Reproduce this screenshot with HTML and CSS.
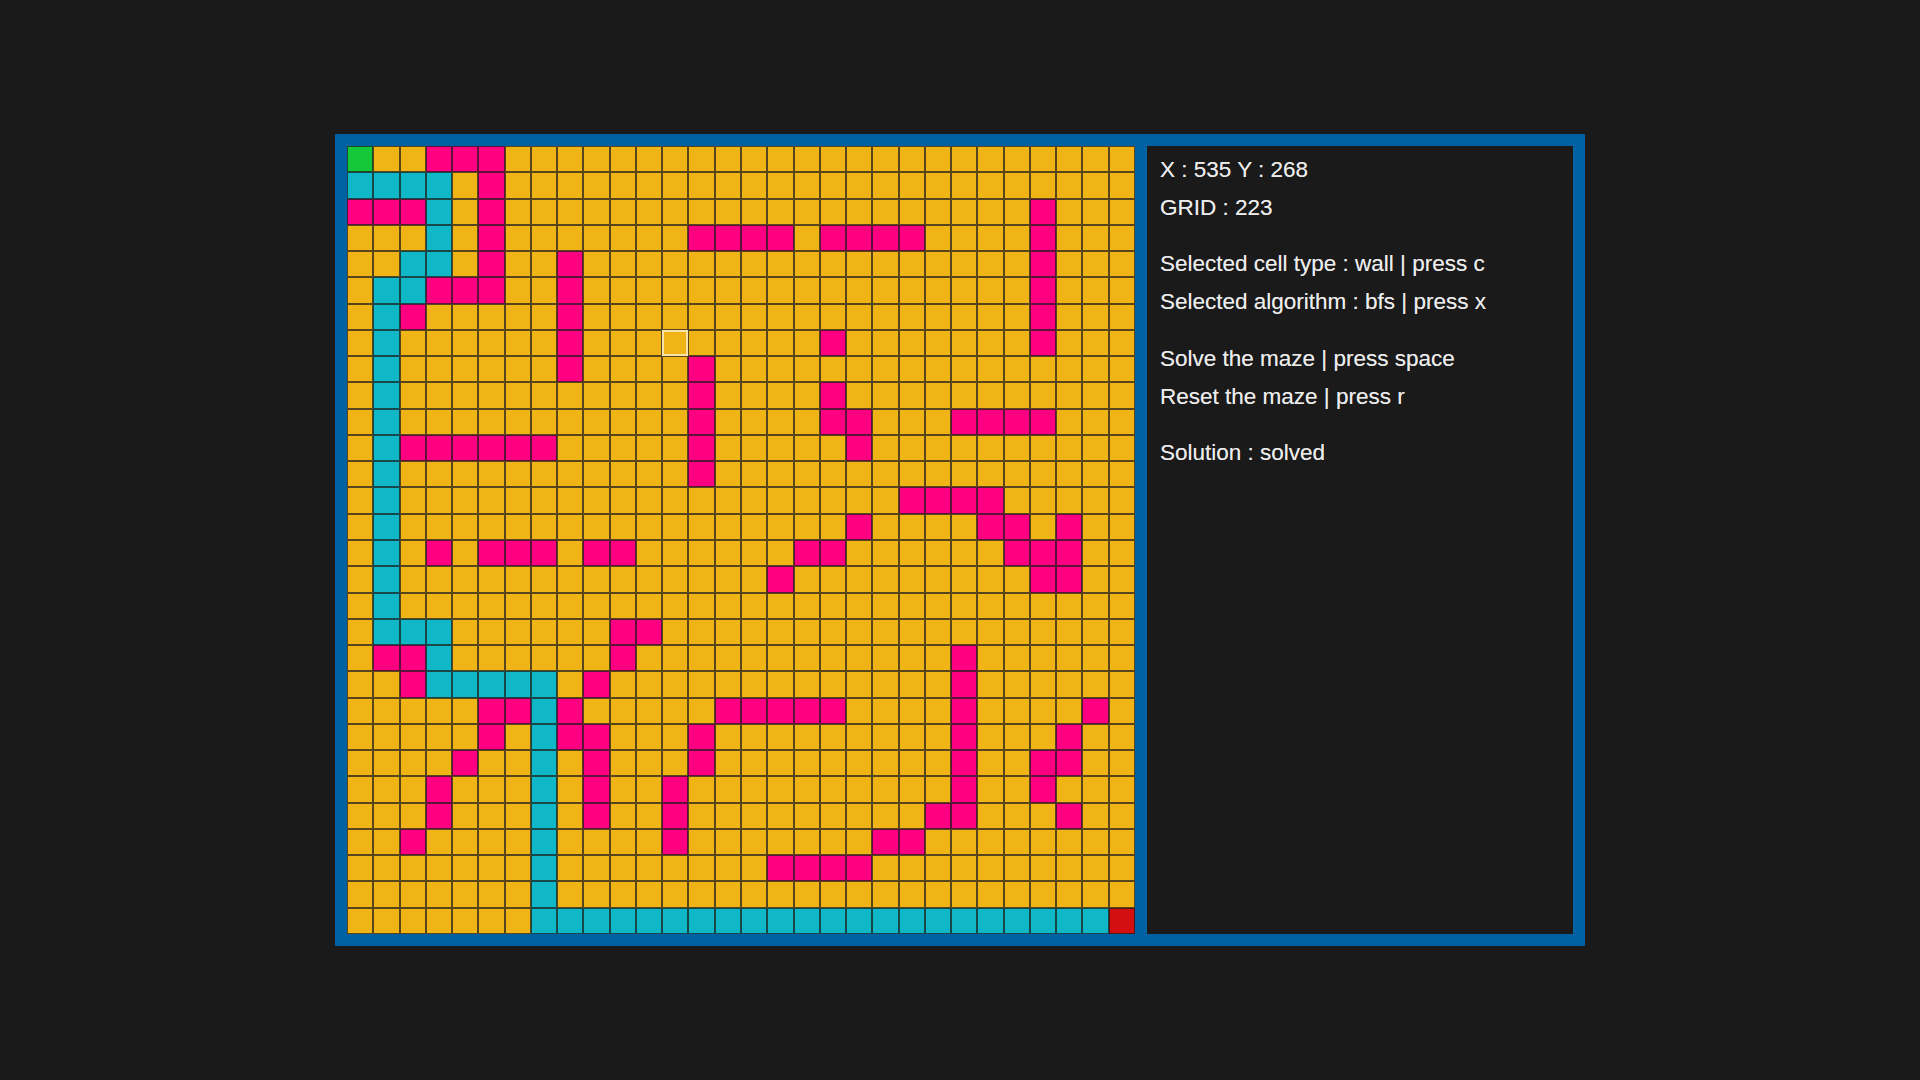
FILE: index.html
```html
<!DOCTYPE html>
<html lang="en">
<head>
<meta charset="utf-8">
<title>Maze solver</title>
<link rel="stylesheet" href="styles.css">
</head>
<body>
<main class="frame">
<div class="maze">
<i class="start"></i><i></i><i></i><i class="wall"></i><i class="wall"></i><i class="wall"></i> <i></i><i></i><i></i><i></i><i></i><i></i><i></i><i></i><i></i><i></i><i></i><i></i><i></i><i></i><i></i><i></i><i></i><i></i><i></i><i></i><i></i><i></i><i></i><i></i>
<i class="path"></i><i class="path"></i><i class="path"></i><i class="path"></i><i></i><i class="wall"></i> <i></i><i></i><i></i><i></i><i></i><i></i><i></i><i></i><i></i><i></i><i></i><i></i><i></i><i></i><i></i><i></i><i></i><i></i><i></i><i></i><i></i><i></i><i></i><i></i>
<i class="wall"></i><i class="wall"></i><i class="wall"></i><i class="path"></i><i></i><i class="wall"></i> <i></i><i></i><i></i><i></i><i></i><i></i><i></i><i></i><i></i><i></i><i></i><i></i><i></i><i></i><i></i><i></i><i></i><i></i><i></i><i></i> <i class="wall"></i><i></i><i></i><i></i>
<i></i><i></i><i></i><i class="path"></i><i></i><i class="wall"></i> <i></i><i></i><i></i><i></i><i></i><i></i><i></i> <i class="wall"></i><i class="wall"></i><i class="wall"></i><i class="wall"></i><i></i><i class="wall"></i><i class="wall"></i><i class="wall"></i><i class="wall"></i> <i></i><i></i><i></i><i></i><i class="wall"></i><i></i><i></i><i></i>
<i></i><i></i><i class="path"></i><i class="path"></i><i></i><i class="wall"></i><i></i><i></i><i class="wall"></i> <i></i><i></i><i></i><i></i><i></i><i></i><i></i><i></i><i></i><i></i><i></i><i></i><i></i><i></i><i></i><i></i><i></i> <i class="wall"></i><i></i><i></i><i></i>
<i></i><i class="path"></i><i class="path"></i><i class="wall"></i><i class="wall"></i><i class="wall"></i><i></i><i></i><i class="wall"></i> <i></i><i></i><i></i><i></i><i></i><i></i><i></i><i></i><i></i><i></i><i></i><i></i><i></i><i></i><i></i><i></i><i></i> <i class="wall"></i><i></i><i></i><i></i>
<i></i><i class="path"></i><i class="wall"></i><i></i><i></i><i></i><i></i><i></i><i class="wall"></i> <i></i><i></i><i></i><i></i><i></i><i></i><i></i><i></i><i></i><i></i><i></i><i></i><i></i><i></i><i></i><i></i><i></i> <i class="wall"></i><i></i><i></i><i></i>
<i></i><i class="path"></i><i></i><i></i><i></i><i></i><i></i><i></i><i class="wall"></i><i></i><i></i><i></i><i class="hover"></i><i></i><i></i><i></i><i></i><i></i><i class="wall"></i><i></i><i></i><i></i><i></i><i></i><i></i><i></i><i class="wall"></i><i></i><i></i><i></i>
<i></i><i class="path"></i><i></i><i></i><i></i><i></i><i></i><i></i><i class="wall"></i><i></i><i></i><i></i><i></i><i class="wall"></i> <i></i><i></i><i></i><i></i><i></i><i></i><i></i><i></i><i></i><i></i><i></i><i></i><i></i><i></i><i></i><i></i>
<i></i><i class="path"></i> <i></i><i></i><i></i><i></i><i></i><i></i><i></i><i></i><i></i><i></i><i></i> <i class="wall"></i><i></i><i></i><i></i><i></i><i class="wall"></i> <i></i><i></i><i></i><i></i><i></i><i></i><i></i><i></i><i></i><i></i><i></i>
<i></i><i class="path"></i> <i></i><i></i><i></i><i></i><i></i><i></i><i></i><i></i><i></i><i></i><i></i> <i class="wall"></i><i></i><i></i><i></i><i></i><i class="wall"></i><i class="wall"></i><i></i><i></i><i></i><i class="wall"></i><i class="wall"></i><i class="wall"></i><i class="wall"></i><i></i><i></i><i></i>
<i></i><i class="path"></i><i class="wall"></i><i class="wall"></i><i class="wall"></i><i class="wall"></i><i class="wall"></i><i class="wall"></i><i></i><i></i><i></i><i></i><i></i><i class="wall"></i><i></i><i></i><i></i><i></i><i></i><i class="wall"></i> <i></i><i></i><i></i><i></i><i></i><i></i><i></i><i></i><i></i><i></i>
<i></i><i class="path"></i> <i></i><i></i><i></i><i></i><i></i><i></i><i></i><i></i><i></i><i></i><i></i> <i class="wall"></i> <i></i><i></i><i></i><i></i><i></i><i></i><i></i><i></i><i></i><i></i><i></i><i></i><i></i><i></i><i></i><i></i>
<i></i><i class="path"></i> <i></i><i></i><i></i><i></i><i></i><i></i><i></i><i></i><i></i><i></i><i></i><i></i><i></i><i></i><i></i><i></i><i></i><i></i><i></i> <i class="wall"></i><i class="wall"></i><i class="wall"></i><i class="wall"></i><i></i><i></i><i></i><i></i><i></i>
<i></i><i class="path"></i> <i></i><i></i><i></i><i></i><i></i><i></i><i></i><i></i><i></i><i></i><i></i><i></i><i></i><i></i><i></i><i></i><i></i> <i class="wall"></i><i></i><i></i><i></i><i></i><i class="wall"></i><i class="wall"></i><i></i><i class="wall"></i><i></i><i></i>
<i></i><i class="path"></i><i></i><i class="wall"></i><i></i><i class="wall"></i><i class="wall"></i><i class="wall"></i><i></i><i class="wall"></i><i class="wall"></i> <i></i><i></i><i></i><i></i><i></i><i></i> <i class="wall"></i><i class="wall"></i> <i></i><i></i><i></i><i></i><i></i><i></i> <i class="wall"></i><i class="wall"></i><i class="wall"></i><i></i><i></i>
<i></i><i class="path"></i> <i></i><i></i><i></i><i></i><i></i><i></i><i></i><i></i><i></i><i></i><i></i><i></i><i></i><i></i> <i class="wall"></i> <i></i><i></i><i></i><i></i><i></i><i></i><i></i><i></i><i></i> <i class="wall"></i><i class="wall"></i><i></i><i></i>
<i></i><i class="path"></i> <i></i><i></i><i></i><i></i><i></i><i></i><i></i><i></i><i></i><i></i><i></i><i></i><i></i><i></i><i></i><i></i><i></i><i></i><i></i><i></i><i></i><i></i><i></i><i></i><i></i><i></i><i></i><i></i>
<i></i><i class="path"></i><i class="path"></i><i class="path"></i> <i></i><i></i><i></i><i></i><i></i><i></i> <i class="wall"></i><i class="wall"></i> <i></i><i></i><i></i><i></i><i></i><i></i><i></i><i></i><i></i><i></i><i></i><i></i><i></i><i></i><i></i><i></i><i></i><i></i>
<i></i><i class="wall"></i><i class="wall"></i><i class="path"></i> <i></i><i></i><i></i><i></i><i></i><i></i> <i class="wall"></i> <i></i><i></i><i></i><i></i><i></i><i></i><i></i><i></i><i></i><i></i><i></i><i></i> <i class="wall"></i> <i></i><i></i><i></i><i></i><i></i><i></i>
<i></i><i></i><i class="wall"></i><i class="path"></i><i class="path"></i><i class="path"></i><i class="path"></i><i class="path"></i><i></i><i class="wall"></i> <i></i><i></i><i></i><i></i><i></i><i></i><i></i><i></i><i></i><i></i><i></i><i></i><i></i> <i class="wall"></i> <i></i><i></i><i></i><i></i><i></i><i></i>
<i></i><i></i><i></i><i></i><i></i><i class="wall"></i><i class="wall"></i><i class="path"></i><i class="wall"></i> <i></i><i></i><i></i><i></i><i></i> <i class="wall"></i><i class="wall"></i><i class="wall"></i><i class="wall"></i><i class="wall"></i> <i></i><i></i><i></i><i></i><i class="wall"></i><i></i><i></i><i></i><i></i><i class="wall"></i><i></i>
<i></i><i></i><i></i><i></i><i></i><i class="wall"></i><i></i><i class="path"></i><i class="wall"></i><i class="wall"></i><i></i><i></i><i></i><i class="wall"></i> <i></i><i></i><i></i><i></i><i></i><i></i><i></i><i></i><i></i> <i class="wall"></i><i></i><i></i><i></i><i class="wall"></i><i></i><i></i>
<i></i><i></i><i></i><i></i><i class="wall"></i><i></i><i></i><i class="path"></i><i></i><i class="wall"></i><i></i><i></i><i></i><i class="wall"></i> <i></i><i></i><i></i><i></i><i></i><i></i><i></i><i></i><i></i> <i class="wall"></i><i></i><i></i><i class="wall"></i><i class="wall"></i><i></i><i></i>
<i></i><i></i><i></i><i class="wall"></i><i></i><i></i><i></i><i class="path"></i><i></i><i class="wall"></i><i></i><i></i><i class="wall"></i> <i></i><i></i><i></i><i></i><i></i><i></i><i></i><i></i><i></i><i></i> <i class="wall"></i><i></i><i></i><i class="wall"></i><i></i><i></i><i></i>
<i></i><i></i><i></i><i class="wall"></i><i></i><i></i><i></i><i class="path"></i><i></i><i class="wall"></i><i></i><i></i><i class="wall"></i> <i></i><i></i><i></i><i></i><i></i><i></i><i></i><i></i><i></i> <i class="wall"></i><i class="wall"></i><i></i><i></i><i></i><i class="wall"></i><i></i><i></i>
<i></i><i></i><i class="wall"></i><i></i><i></i><i></i><i></i><i class="path"></i><i></i><i></i><i></i><i></i><i class="wall"></i> <i></i><i></i><i></i><i></i><i></i><i></i><i></i> <i class="wall"></i><i class="wall"></i> <i></i><i></i><i></i><i></i><i></i><i></i><i></i><i></i>
<i></i><i></i><i></i><i></i><i></i><i></i><i></i><i class="path"></i> <i></i><i></i><i></i><i></i><i></i><i></i><i></i><i></i> <i class="wall"></i><i class="wall"></i><i class="wall"></i><i class="wall"></i> <i></i><i></i><i></i><i></i><i></i><i></i><i></i><i></i><i></i><i></i>
<i></i><i></i><i></i><i></i><i></i><i></i><i></i><i class="path"></i> <i></i><i></i><i></i><i></i><i></i><i></i><i></i><i></i><i></i><i></i><i></i><i></i><i></i><i></i><i></i><i></i><i></i><i></i><i></i><i></i><i></i><i></i>
<i></i><i></i><i></i><i></i><i></i><i></i><i></i> <i class="path"></i><i class="path"></i><i class="path"></i><i class="path"></i><i class="path"></i><i class="path"></i><i class="path"></i><i class="path"></i><i class="path"></i><i class="path"></i><i class="path"></i><i class="path"></i><i class="path"></i><i class="path"></i><i class="path"></i><i class="path"></i><i class="path"></i><i class="path"></i><i class="path"></i><i class="path"></i><i class="path"></i><i class="path"></i> <i class="end"></i>
</div>
<section class="panel">
<div class="group">
<p>X : 535 Y : 268</p>
<p>GRID : 223</p>
</div>
<div class="group">
<p>Selected cell type : wall | press c</p>
<p>Selected algorithm : bfs | press x</p>
</div>
<div class="group">
<p>Solve the maze | press space</p>
<p>Reset the maze | press r</p>
</div>
<div class="group">
<p>Solution : solved</p>
</div>
</section>
</main>
</body>
</html>
```

FILE: styles.css
```css
* {
  box-sizing: border-box;
}

html,
body {
  margin: 0;
  height: 100%;
}

body {
  background: #1a1a1a;
  display: flex;
  align-items: center;
  justify-content: center;
  font-family: "Liberation Sans", Arial, sans-serif;
}

.frame {
  display: flex;
  gap: 12px;
  padding: 12px;
  width: 1250px;
  height: 812px;
  background: #0161a3;
}

.maze {
  flex: none;
  width: 788px;
  height: 788px;
  display: grid;
  grid-template-columns: repeat(30, 1fr);
  grid-template-rows: repeat(30, 1fr);
}

.maze i {
  display: block;
  background: #f0b416;
  box-shadow: inset 0 0 0 1px rgba(28, 28, 28, 0.72);
}

.maze i.wall {
  background: #ff0080;
}

.maze i.path {
  background: #10b7c6;
}

.maze i.start {
  background: #14c83a;
}

.maze i.end {
  background: #d30f0f;
}

.maze i.hover {
  box-shadow: inset 0 0 0 2px #f9e3a8;
}

.panel {
  flex: 1;
  background: #1a1a1a;
  padding: 5px 13px;
  color: #ececec;
  font-size: 22.5px;
  line-height: 37.7px;
  text-shadow: 0 0 0.6px rgba(255, 255, 255, 0.55);
}

.panel p {
  margin: 0;
  white-space: nowrap;
}

.group + .group {
  margin-top: 19px;
}
```
